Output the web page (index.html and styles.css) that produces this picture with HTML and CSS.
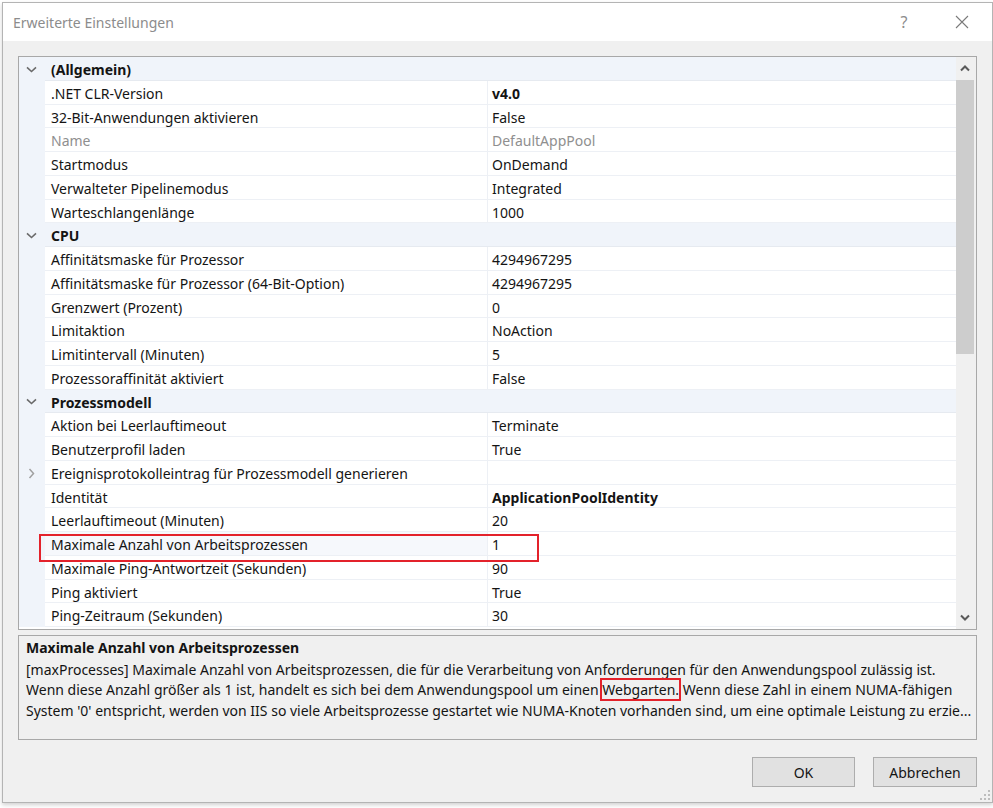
FILE: index.html
```html
<!DOCTYPE html>
<html lang="de">
<head>
<meta charset="utf-8">
<title>Erweiterte Einstellungen</title>
<link rel="stylesheet" href="styles.css">
</head>
<body>
<div class="window">
  <header class="titlebar">
    <span class="title">Erweiterte Einstellungen</span>
    <span class="help">?</span>
    <span class="close"><svg width="14" height="14" viewBox="0 0 14 14"><path d="M1 1L13 13M13 1L1 13" stroke="#7a7a7a" stroke-width="1.1" fill="none"/></svg></span>
  </header>
  <main class="content">
    <div class="grid">
      <div class="list">
        <div class="row cat"><span class="gut"><svg class="chev" width="11" height="7" viewBox="0 0 11 7"><path d="M1 1.3L5.5 5.5L10 1.3" stroke="#6a6a6a" stroke-width="1.6" fill="none"/></svg></span><span class="name">(Allgemein)</span></div>
        <div class="row"><span class="gut"></span><span class="name">.NET CLR-Version</span><span class="val b">v4.0</span></div>
        <div class="row"><span class="gut"></span><span class="name">32-Bit-Anwendungen aktivieren</span><span class="val">False</span></div>
        <div class="row dis"><span class="gut"></span><span class="name">Name</span><span class="val">DefaultAppPool</span></div>
        <div class="row"><span class="gut"></span><span class="name">Startmodus</span><span class="val">OnDemand</span></div>
        <div class="row"><span class="gut"></span><span class="name">Verwalteter Pipelinemodus</span><span class="val">Integrated</span></div>
        <div class="row"><span class="gut"></span><span class="name">Warteschlangenlänge</span><span class="val">1000</span></div>
        <div class="row cat"><span class="gut"><svg class="chev" width="11" height="7" viewBox="0 0 11 7"><path d="M1 1.3L5.5 5.5L10 1.3" stroke="#6a6a6a" stroke-width="1.6" fill="none"/></svg></span><span class="name">CPU</span></div>
        <div class="row"><span class="gut"></span><span class="name">Affinitätsmaske für Prozessor</span><span class="val">4294967295</span></div>
        <div class="row"><span class="gut"></span><span class="name">Affinitätsmaske für Prozessor (64-Bit-Option)</span><span class="val">4294967295</span></div>
        <div class="row"><span class="gut"></span><span class="name">Grenzwert (Prozent)</span><span class="val">0</span></div>
        <div class="row"><span class="gut"></span><span class="name">Limitaktion</span><span class="val">NoAction</span></div>
        <div class="row"><span class="gut"></span><span class="name">Limitintervall (Minuten)</span><span class="val">5</span></div>
        <div class="row"><span class="gut"></span><span class="name">Prozessoraffinität aktiviert</span><span class="val">False</span></div>
        <div class="row cat"><span class="gut"><svg class="chev" width="11" height="7" viewBox="0 0 11 7"><path d="M1 1.3L5.5 5.5L10 1.3" stroke="#6a6a6a" stroke-width="1.6" fill="none"/></svg></span><span class="name">Prozessmodell</span></div>
        <div class="row"><span class="gut"></span><span class="name">Aktion bei Leerlauftimeout</span><span class="val">Terminate</span></div>
        <div class="row"><span class="gut"></span><span class="name">Benutzerprofil laden</span><span class="val">True</span></div>
        <div class="row"><span class="gut"><svg class="chev" width="7" height="11" viewBox="0 0 7 11"><path d="M1.5 1L5.5 5.5L1.5 10" stroke="#a0a0a0" stroke-width="1.5" fill="none"/></svg></span><span class="name">Ereignisprotokolleintrag für Prozessmodell generieren</span><span class="val"></span></div>
        <div class="row"><span class="gut"></span><span class="name">Identität</span><span class="val b">ApplicationPoolIdentity</span></div>
        <div class="row"><span class="gut"></span><span class="name">Leerlauftimeout (Minuten)</span><span class="val">20</span></div>
        <div class="row sel"><span class="gut"></span><span class="name">Maximale Anzahl von Arbeitsprozessen</span><span class="val">1</span></div>
        <div class="row"><span class="gut"></span><span class="name">Maximale Ping-Antwortzeit (Sekunden)</span><span class="val">90</span></div>
        <div class="row"><span class="gut"></span><span class="name">Ping aktiviert</span><span class="val">True</span></div>
        <div class="row"><span class="gut"></span><span class="name">Ping-Zeitraum (Sekunden)</span><span class="val">30</span></div>
      </div>
      <div class="scrollbar">
        <div class="sb-btn"><svg width="10" height="7" viewBox="0 0 10 7"><path d="M1 5.5L5 1.5L9 5.5" stroke="#5a5a5a" stroke-width="2" fill="none"/></svg></div>
        <div class="sb-track"><div class="sb-thumb"></div></div>
        <div class="sb-btn"><svg width="10" height="7" viewBox="0 0 10 7"><path d="M1 1.5L5 5.5L9 1.5" stroke="#5a5a5a" stroke-width="2" fill="none"/></svg></div>
      </div>
    </div>
    <div class="desc">
      <div class="desc-title">Maximale Anzahl von Arbeitsprozessen</div>
      <div class="desc-text">
        <div class="line">[maxProcesses] Maximale Anzahl von Arbeitsprozessen, die für die Verarbeitung von Anforderungen für den Anwendungspool zulässig ist.</div>
        <div class="line">Wenn diese Anzahl größer als 1 ist, handelt es sich bei dem Anwendungspool um einen <span class="mark">Webgarten.</span> Wenn diese Zahl in einem NUMA-fähigen</div>
        <div class="line">System '0' entspricht, werden von IIS so viele Arbeitsprozesse gestartet wie NUMA-Knoten vorhanden sind, um eine optimale Leistung zu erzie...</div>
      </div>
    </div>
    <div class="buttons">
      <button class="btn">OK</button>
      <button class="btn">Abbrechen</button>
    </div>
    <svg class="grip" width="10" height="10" viewBox="0 0 10 10"><rect x="8" y="0" width="2" height="2" fill="#bdbdbd"/><rect x="4" y="4" width="2" height="2" fill="#bdbdbd"/><rect x="8" y="4" width="2" height="2" fill="#bdbdbd"/><rect x="0" y="8" width="2" height="2" fill="#bdbdbd"/><rect x="4" y="8" width="2" height="2" fill="#bdbdbd"/><rect x="8" y="8" width="2" height="2" fill="#bdbdbd"/></svg>
  </main>
</div>
</body>
</html>
```

FILE: styles.css
```css
* { box-sizing: border-box; }
html, body { margin: 0; padding: 0; }
body {
  background: #ffffff;
  width: 993px;
  height: 808px;
  overflow: hidden;
  font-family: "Noto Sans", "Open Sans", sans-serif;
  font-size: 14px;
  color: #141414;
}
.window {
  margin: 2px 0 0 2px;
  width: 991px;
  height: 801px;
  border: 1px solid #b4b4b4;
  box-shadow: 0 2px 4px rgba(0,0,0,0.18);
  display: flex;
  flex-direction: column;
  background: #f0f0f0;
}
.titlebar {
  height: 38px;
  flex: none;
  background: #ffffff;
  display: flex;
  align-items: center;
  padding-left: 10px;
}
.title {
  flex: 1;
  color: #8c8c8c;
  font-size: 14px;
}
.help {
  color: #8c8c8c;
  font-size: 16px;
  width: 20px;
  text-align: center;
  margin-right: 33px;
}
.close {
  width: 30px;
  margin-right: 15px;
  display: flex;
  align-items: center;
  justify-content: center;
}
.content {
  flex: 1;
  position: relative;
  padding: 15px;
  display: flex;
  flex-direction: column;
}
.grid {
  height: 574px;
  flex: none;
  border: 1px solid #a8a8a8;
  background: #ffffff;
  display: flex;
  overflow: hidden;
}
.list {
  width: 937px;
  flex: none;
  overflow: hidden;
}
.row {
  display: grid;
  grid-template-columns: 26px 442px 1fr;
  height: 23.75px;
  position: relative;
}
.gut {
  background: #f0f4fa;
  display: flex;
  align-items: center;
  justify-content: center;
  padding-right: 1px;
  padding-top: 1px;
}
.name, .val {
  border-bottom: 1px solid #edf0f5;
  line-height: 22.75px;
  padding-top: 2px;
  white-space: nowrap;
  overflow: hidden;
}
.name { padding-left: 6px; }
.val {
  padding-left: 4px;
  border-left: 1px solid #edf0f5;
}
.b { font-weight: bold; }
.cat { background: #f0f4fa; }
.cat .name {
  grid-column: 2 / 4;
  font-weight: bold;
  border-bottom-color: #e6eaf0;
}
.dis .name, .dis .val { color: #8f8f8f; }
.sel .name { background: #f6f8fc; }
.sel::after {
  content: "";
  position: absolute;
  z-index: 2;
  left: 20px;
  top: 2px;
  width: 496px;
  height: 24px;
  border: 2px solid #e3222b;
}
.scrollbar {
  width: 20px;
  flex: none;
  background: #f0f0f0;
  display: flex;
  flex-direction: column;
}
.sb-btn {
  height: 23px;
  flex: none;
  display: flex;
  align-items: center;
  justify-content: center;
  padding-right: 2px;
}
.sb-track {
  flex: 1;
  padding-right: 2px;
}
.sb-thumb {
  height: 274px;
  background: #cdcdcd;
}
.desc {
  margin-top: 5px;
  height: 105px;
  flex: none;
  border: 1px solid #a8a8a8;
  padding: 2px 7px 0 7px;
  line-height: 20.5px;
}
.desc-title { font-weight: bold; }
.desc-text { margin-top: 1px; }
.line { white-space: nowrap; }
.mark { outline: 2px solid #e3222b; outline-offset: 0; }
.buttons {
  margin-top: 17px;
  display: flex;
  justify-content: flex-end;
  gap: 18px;
}
.btn {
  height: 30px;
  width: 103px;
  background: #e1e1e1;
  border: 1px solid #adadad;
  font-family: "Noto Sans", "Open Sans", sans-serif;
  font-size: 14px;
  color: #141414;
  padding: 0;
}
.btn + .btn { width: 104px; }
.grip {
  position: absolute;
  right: 2px;
  bottom: 2px;
}
```
